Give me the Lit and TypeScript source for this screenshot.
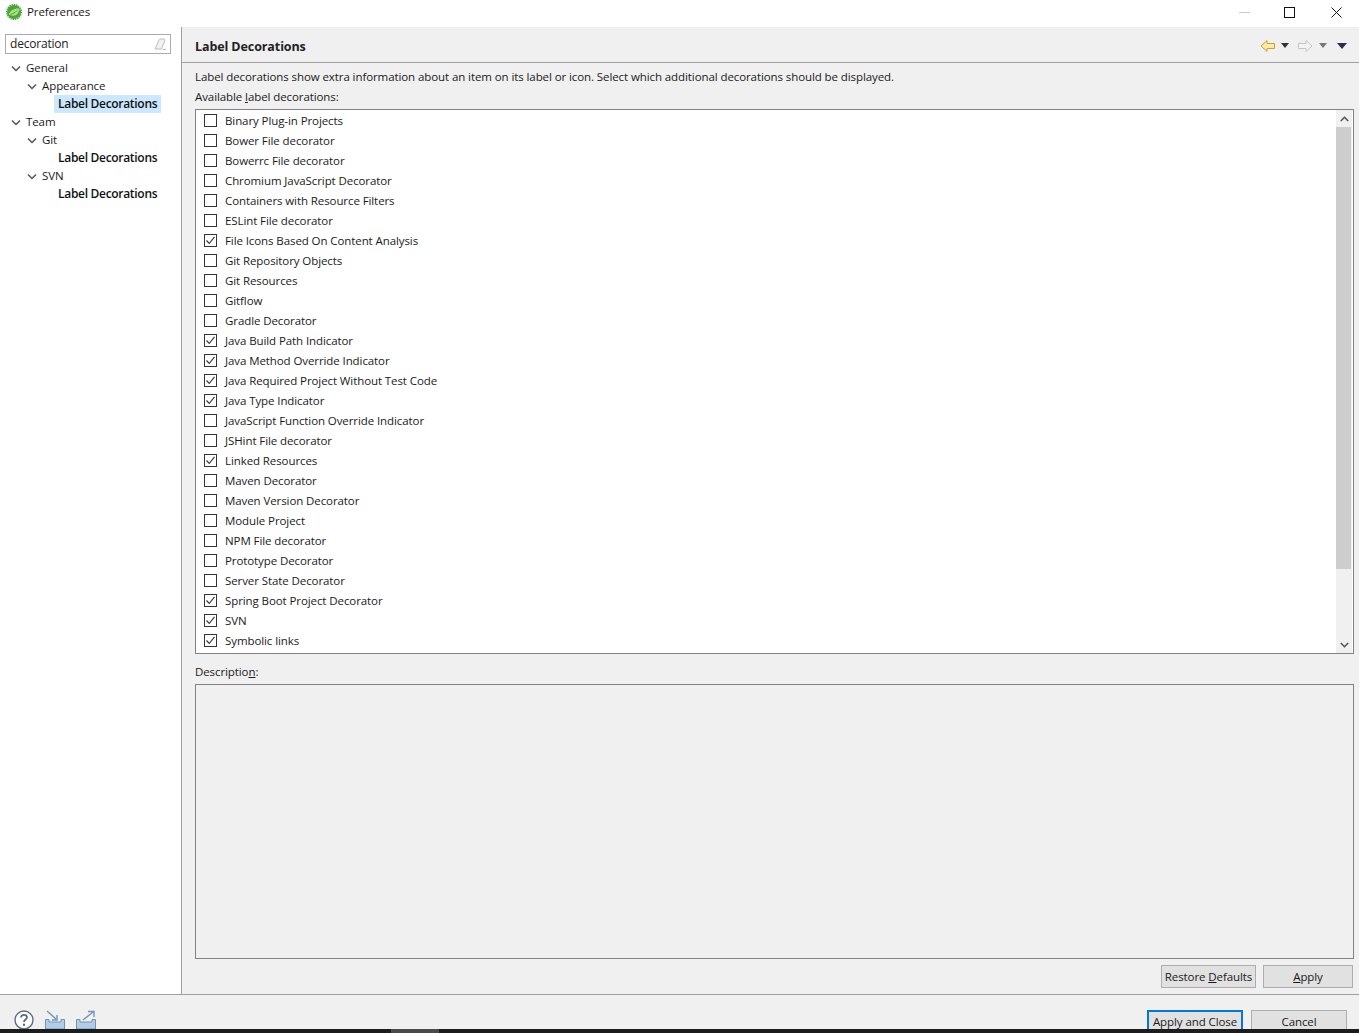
import { LitElement, html, css, svg } from "lit";
import { customElement } from "lit/decorators.js";

const items: [string, boolean][] = [
  ["Binary Plug-in Projects", false],
  ["Bower File decorator", false],
  ["Bowerrc File decorator", false],
  ["Chromium JavaScript Decorator", false],
  ["Containers with Resource Filters", false],
  ["ESLint File decorator", false],
  ["File Icons Based On Content Analysis", true],
  ["Git Repository Objects", false],
  ["Git Resources", false],
  ["Gitflow", false],
  ["Gradle Decorator", false],
  ["Java Build Path Indicator", true],
  ["Java Method Override Indicator", true],
  ["Java Required Project Without Test Code", true],
  ["Java Type Indicator", true],
  ["JavaScript Function Override Indicator", false],
  ["JSHint File decorator", false],
  ["Linked Resources", true],
  ["Maven Decorator", false],
  ["Maven Version Decorator", false],
  ["Module Project", false],
  ["NPM File decorator", false],
  ["Prototype Decorator", false],
  ["Server State Decorator", false],
  ["Spring Boot Project Decorator", true],
  ["SVN", true],
  ["Symbolic links", true],
];

const tree: [number, string, boolean?][] = [
  [0, "General"],
  [1, "Appearance"],
  [2, "Label Decorations", true],
  [0, "Team"],
  [1, "Git"],
  [2, "Label Decorations"],
  [1, "SVN"],
  [2, "Label Decorations"],
];

const chevron = svg`<svg class="chev" width="10" height="7" viewBox="0 0 10 7"><path d="M1 1.5 L5 5.5 L9 1.5" fill="none" stroke="#555" stroke-width="1.5"/></svg>`;

@customElement("app-root")
export class AppRoot extends LitElement {
  static styles = css`
    :host { display: block; width: 1359px; height: 1033px; overflow: hidden; background: #f0f0f0; color: #1a1a1a;
      font-family: "Open Sans", "Noto Sans", sans-serif; font-size: 11.5px; letter-spacing: -0.09px; line-height: 16px; }
    * { box-sizing: border-box; }
    u { text-underline-offset: 1px; }
    .title { height: 27px; background: #fff; display: flex; align-items: center; padding-left: 6px; gap: 5px; }
    .title .ttext { flex: 1; margin-top: -3px; }
    .title .logo { margin-top: -3px; }
    .wb { display: flex; width: 46px; height: 24px; align-items: center; justify-content: center; margin-top: -3px; }
    .wbs { display: flex; }
    .wb.max svg { margin-left: -2px; }
    .main { height: 968px; display: flex; border-bottom: 1px solid #a0a0a0; }
    .left { width: 182px; background: #fff; border-right: 1px solid #a0a0a0; padding: 7px 10px 0 5px; }
    .search { width: 166px; height: 20px; border: 1px solid #ababab; display: flex; align-items: center; justify-content: space-between; padding: 0 3px 0 4px; margin-bottom: 5px; color: #222; font-size: 12px; letter-spacing: -0.2px; }
    .tree { display: flex; flex-direction: column; margin-left: -5px; width: 181px; }
    .node { height: 18px; display: flex; align-items: center; }
    .node .chev { margin-right: 5px; flex: none; }
    .l0 { padding-left: 11px; }
    .l1 { padding-left: 27px; }
    .l2 { padding-left: 54px; }
    .leaf { font-size: 12px; font-weight: 600; padding: 0 4px; height: 18px; line-height: 18px; color: #111; letter-spacing: -0.3px; width: 107px; white-space: nowrap; }
    .sel { background: #cce8ff; }
    .right { flex: 1; display: flex; flex-direction: column; min-width: 0; }
    .head { height: 36px; border-bottom: 1px solid #a0a0a0; display: flex; align-items: center; padding: 2px 12px 0 13px; }
    .head .h { flex: 1; font-size: 12.5px; font-weight: 700; color: #222; letter-spacing: -0.1px; padding-top: 2px; }
    .tb { display: flex; align-items: center; }
    .content { padding: 6px 5px 0 13px; flex: 1; display: flex; flex-direction: column; }
    .line { height: 16px; white-space: nowrap; }
    .l-avail { margin-top: 4px; margin-bottom: 4px; }
    .listbox { height: 545px; background: #fff; border: 1px solid #828282; display: flex; }
    .rows { flex: 1; padding-top: 1px; }
    .row { height: 20px; display: flex; align-items: center; padding-left: 8px; gap: 8px; white-space: nowrap; }
    .cb { width: 13px; height: 13px; margin-top: -1px; border: 1px solid #333; background: #fff; flex: none; display: flex; align-items: center; justify-content: center; }
    .sb { width: 16px; margin-right: 1px; background: #f0f0f0; display: flex; flex-direction: column; }
    .sb .arrow { height: 17px; display: flex; align-items: center; justify-content: center; }
    .track { flex: 1; }
    .thumb { height: 442px; background: #cdcdcd; margin-right: 1px; }
    .l-dlabel { margin-top: 10px; margin-bottom: 4px; }
    .descbox { height: 275px; border: 1px solid #828282; background: #f0f0f0; }
    .actions { display: flex; justify-content: flex-end; gap: 7px; margin-top: 6px; padding-right: 1px; }
    .btn { height: 23px; background: #e1e1e1; border: 1px solid #adadad; display: flex; align-items: center; justify-content: center; white-space: nowrap; }
    .w95 { width: 95px; } .w90 { width: 90px; } .w96 { width: 96px; }
    .footer { height: 34px; overflow: hidden; display: flex; align-items: flex-start; padding: 15px 12px 0 14px; }
    .ficons { flex: 1; display: flex; gap: 10px; align-items: flex-start; }
    .ficons .exp { margin-left: -1px; }
    .fbtns { display: flex; gap: 8px; }
    .fbtns .btn { height: 25px; padding-bottom: 1px; }
    .primary { border: 2px solid #0078d7; }
    .bar { height: 4px; background: #1c1c1c; display: flex; padding-left: 391px; }
    .bar div { width: 48px; background: #4a4a4a; }
  `;

  render() {
    return html`
      <div class="title">
        <svg class="logo" width="16" height="16" viewBox="0 0 16 16">
          <circle cx="8" cy="8" r="7" fill="#4ba53a"/>
          <circle cx="8" cy="8" r="7.4" fill="none" stroke="#3e8f35" stroke-dasharray="1.3 1" stroke-width="1.2"/>
          <path d="M2.8 10.8 C4 6.5 8.5 4 13.5 4.5 C13 9 10.5 12.2 5.5 11.6 Z" fill="#b2e07f"/>
          <path d="M4.5 10.5 C7 9.5 9 8.5 11.5 6.5" fill="none" stroke="#4ba53a" stroke-width="1"/>
        </svg>
        <span class="ttext">Preferences</span>
        <div class="wbs">
          <div class="wb"><svg width="11" height="11" viewBox="0 0 11 11"><path d="M0 5.5H11" stroke="#ccc" stroke-width="1"/></svg></div>
          <div class="wb max"><svg width="11" height="11" viewBox="0 0 11 11"><rect x=".5" y=".5" width="10" height="10" fill="none" stroke="#111"/></svg></div>
          <div class="wb"><svg width="11" height="11" viewBox="0 0 11 11"><path d="M.5 .5L10.5 10.5M10.5 .5L.5 10.5" stroke="#111" stroke-width="1"/></svg></div>
        </div>
      </div>
      <div class="main">
        <div class="left">
          <div class="search">
            <span>decoration</span>
            <svg width="14" height="14" viewBox="0 0 14 14"><path d="M2 12L6 3C6.5 2 7 2 8 2H11C12 2 12 3 11.7 4L8.5 12Z" fill="#f1f1f1" stroke="#bbb"/><path d="M10 12.5H13" stroke="#bbb"/></svg>
          </div>
          <div class="tree">
            ${tree.map(([lvl, label, sel]) => html`
              <div class="node l${lvl}">
                ${lvl < 2
                  ? html`${chevron}<span>${label}</span>`
                  : html`<span class="leaf ${sel ? "sel" : ""}">${label}</span>`}
              </div>`)}
          </div>
        </div>
        <div class="right">
          <div class="head">
            <span class="h">Label Decorations</span>
            <div class="tb">
              <svg width="16" height="14" viewBox="0 0 16 14"><path d="M1 7L7 1.5V4.5H14.5V9.5H7V12.5Z" fill="#fde9a0" stroke="#c9a13a"/></svg>
              <svg style="margin-left:5px" width="8" height="5" viewBox="0 0 8 5"><path d="M0 0H8L4 5Z" fill="#333"/></svg>
              <svg style="margin-left:8px" width="16" height="14" viewBox="0 0 16 14"><path d="M15 7L9 1.5V4.5H1.5V9.5H9V12.5Z" fill="#f4f4f4" stroke="#c4c4c4"/></svg>
              <svg style="margin-left:6px" width="8" height="5" viewBox="0 0 8 5"><path d="M0 0H8L4 5Z" fill="#777"/></svg>
              <svg style="margin-left:10px" width="10" height="6" viewBox="0 0 10 6"><path d="M0 0H10L5 6Z" fill="#2f2a4e"/></svg>
            </div>
          </div>
          <div class="content">
            <div class="line">Label decorations show extra information about an item on its label or icon. Select which additional decorations should be displayed.</div>
            <div class="line l-avail">Available <u>l</u>abel decorations:</div>
            <div class="listbox">
              <div class="rows">
                ${items.map(([label, on]) => html`
                  <div class="row">
                    <span class="cb">${on ? html`<svg width="11" height="11" viewBox="0 0 11 11"><path d="M1.5 5.5L4.3 8.5L9.5 1.8" fill="none" stroke="#333" stroke-width="1.1"/></svg>` : ""}</span>
                    <span>${label}</span>
                  </div>`)}
              </div>
              <div class="sb">
                <div class="arrow"><svg width="9" height="6" viewBox="0 0 9 6"><path d="M.8 5L4.5 1.3L8.2 5" fill="none" stroke="#555" stroke-width="1.6"/></svg></div>
                <div class="thumb"></div>
                <div class="track"></div>
                <div class="arrow"><svg width="9" height="6" viewBox="0 0 9 6"><path d="M.8 1L4.5 4.7L8.2 1" fill="none" stroke="#555" stroke-width="1.6"/></svg></div>
              </div>
            </div>
            <div class="line l-dlabel">Descriptio<u>n</u>:</div>
            <div class="descbox"></div>
            <div class="actions">
              <div class="btn w95"><span>Restore <u>D</u>efaults</span></div>
              <div class="btn w90"><span><u>A</u>pply</span></div>
            </div>
          </div>
        </div>
      </div>
      <div class="footer">
        <div class="ficons">
          <svg width="20" height="20" viewBox="0 0 20 20"><circle cx="10" cy="10" r="9" fill="#fff" stroke="#5b6f80" stroke-width="1.4"/><path d="M7 7.5C7 5.5 8.5 4.8 10 4.8C11.7 4.8 13 5.8 13 7.3C13 9.5 10 9.5 10 12" fill="none" stroke="#5b6f80" stroke-width="1.8"/><circle cx="10" cy="14.8" r="1.2" fill="#5b6f80"/></svg>
          <svg width="22" height="20" viewBox="0 0 22 20"><path d="M1.5 9.5H5V12H17V9.5H20.5V19H1.5Z" fill="#b4cde6" stroke="#6f94b8"/><path d="M3 1L12 9" stroke="#6f94b8" stroke-width="1.4"/><path d="M13 5V10H8" fill="none" stroke="#6f94b8" stroke-width="1.4"/></svg>
          <svg class="exp" width="22" height="20" viewBox="0 0 22 20"><path d="M1.5 9.5H5V12H17V9.5H20.5V19H1.5Z" fill="#b4cde6" stroke="#6f94b8"/><path d="M8 10L18 2" stroke="#6f94b8" stroke-width="1.4"/><path d="M13 1.5H19V7" fill="none" stroke="#6f94b8" stroke-width="1.4"/></svg>
        </div>
        <div class="fbtns">
          <div class="btn w96 primary">Apply and Close</div>
          <div class="btn w96">Cancel</div>
        </div>
      </div>
      <div class="bar"><div></div></div>
    `;
  }
}
